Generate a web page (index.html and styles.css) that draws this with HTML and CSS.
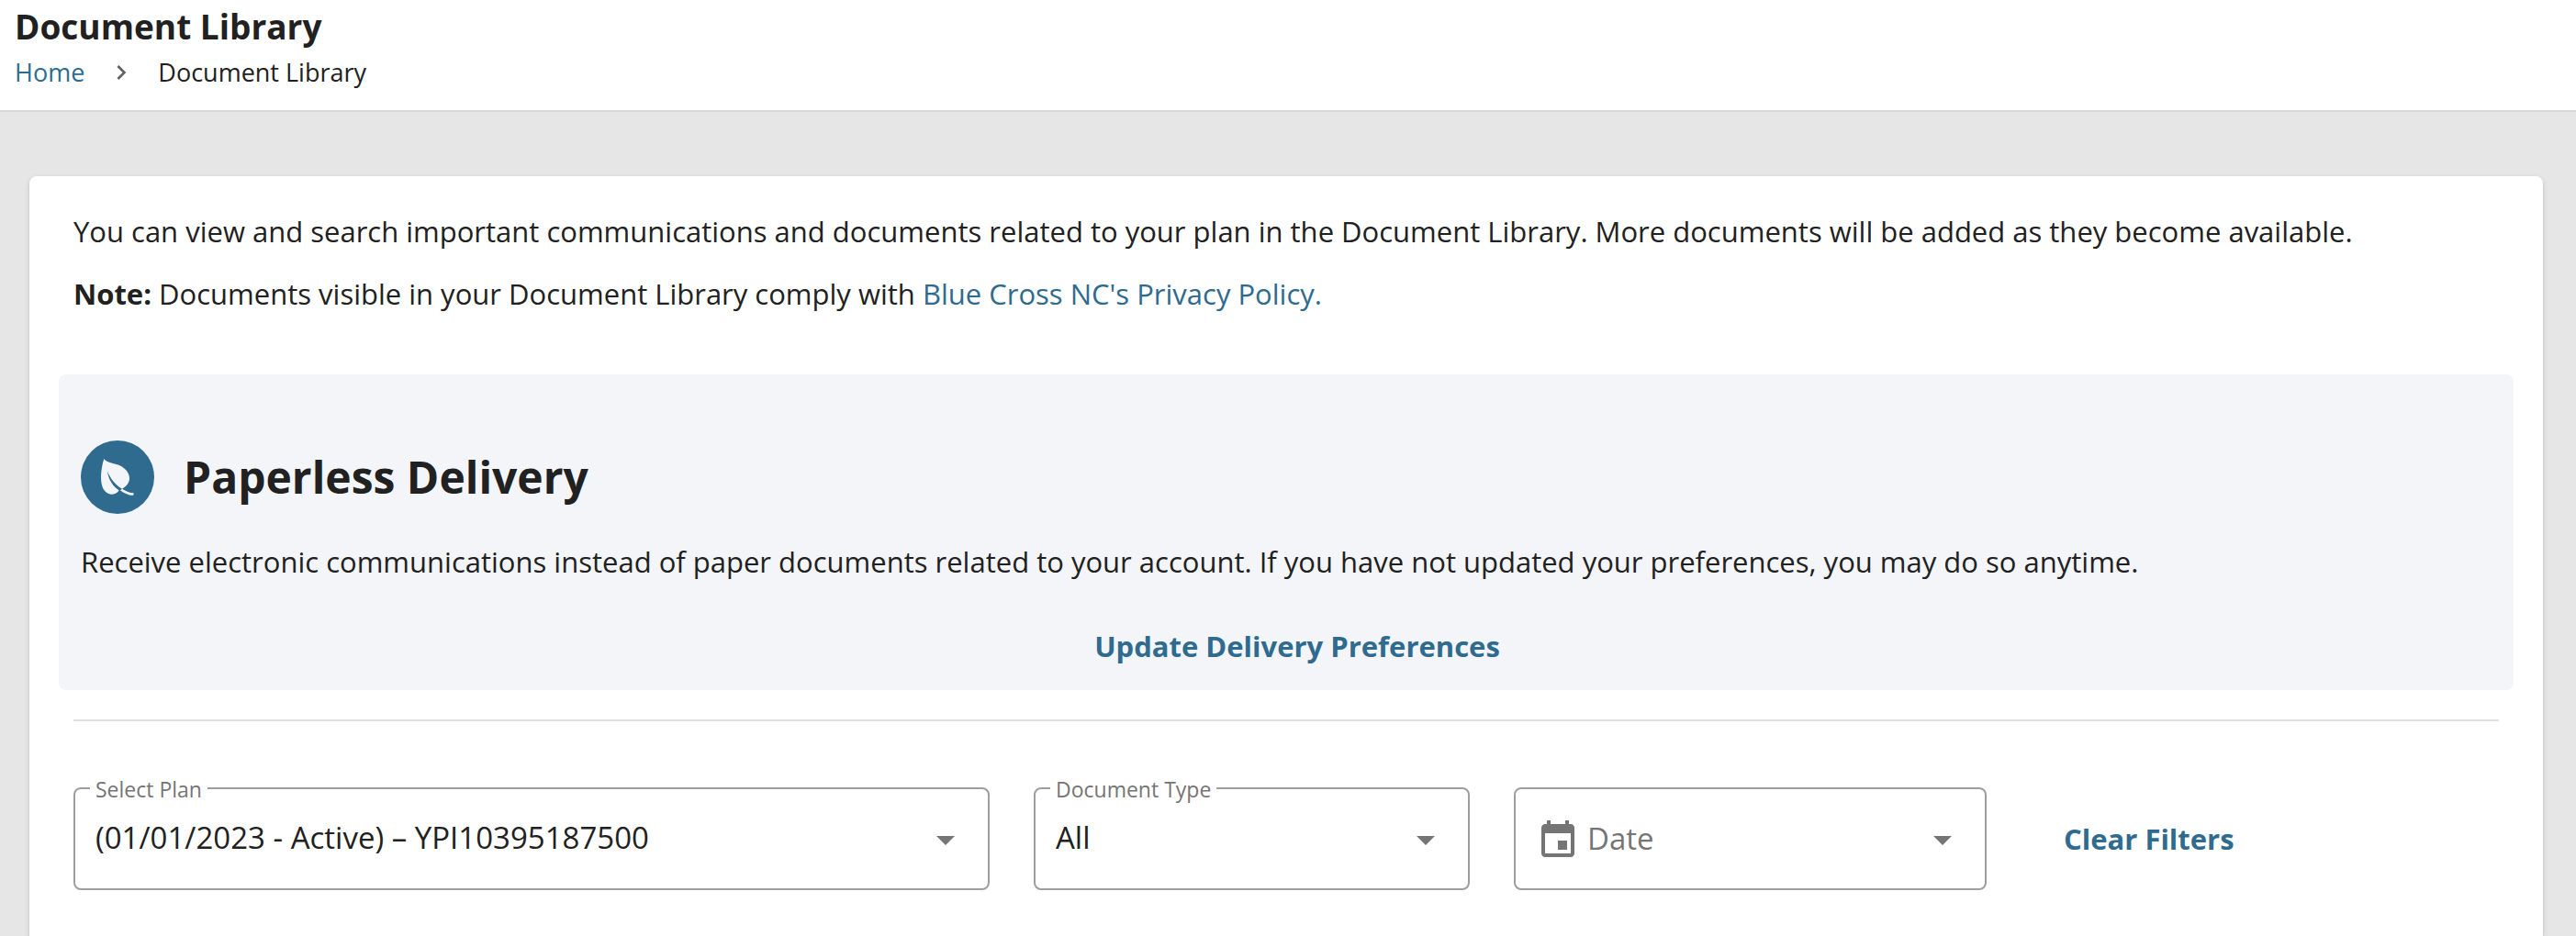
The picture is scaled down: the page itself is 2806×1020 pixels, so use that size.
FILE: index.html
```html
<!DOCTYPE html>
<html lang="en">
<head>
  <meta charset="utf-8">
  <meta name="viewport" content="width=device-width, initial-scale=1">
  <title>Document Library</title>
  <link rel="stylesheet" href="styles.css">
</head>
<body>
  <header class="page-header">
    <h1 class="page-title">Document Library</h1>
    <nav class="breadcrumb" aria-label="Breadcrumb">
      <a class="link" href="#">Home</a>
      <svg class="chevron" viewBox="0 0 24 24" aria-hidden="true"><path d="M10 6 8.59 7.41 13.17 12l-4.58 4.59L10 18l6-6z"/></svg>
      <span aria-current="page">Document Library</span>
    </nav>
  </header>

  <main class="card">
    <div class="intro">
      <p>You can view and search important communications and documents related to your plan in the Document Library. More documents will be added as they become available.</p>
      <p><strong>Note:</strong> Documents visible in your Document Library comply with <a class="link" href="#">Blue Cross NC's Privacy Policy.</a></p>
    </div>

    <section class="paperless">
      <div class="paperless-heading">
        <svg class="leaf" viewBox="0 0 240 240" aria-hidden="true">
          <circle class="leaf-disc" cx="120" cy="120" r="120"/>
          <path class="leaf-shape" d="M76 60C86 75 112 73 132 84C167 105 168 141 135 158C148 166 160 171 173 172L172 179C154 180 140 170 126 161C121 171 111 176 99 176C72 173 63 142 67 103C69 86 72 71 76 60Z"/>
          <path class="leaf-vein" d="M86 99C91 128 106 153 127 164L135 158C112 145 97 125 86 99Z"/>
        </svg>
        <h2>Paperless Delivery</h2>
      </div>
      <p>Receive electronic communications instead of paper documents related to your account. If you have not updated your preferences, you may do so anytime.</p>
      <button class="text-button" type="button">Update Delivery Preferences</button>
    </section>

    <hr class="divider">

    <form class="filters">
      <div class="field">
        <label class="field-label" for="plan">Select Plan</label>
        <select class="field-control" id="plan">
          <option>(01/01/2023 - Active) – YPI10395187500</option>
        </select>
        <svg class="arrow" viewBox="0 0 20 10" aria-hidden="true"><path d="M0 0h20L10 10z"/></svg>
      </div>
      <div class="field">
        <label class="field-label" for="type">Document Type</label>
        <select class="field-control" id="type">
          <option>All</option>
        </select>
        <svg class="arrow" viewBox="0 0 20 10" aria-hidden="true"><path d="M0 0h20L10 10z"/></svg>
      </div>
      <div class="field">
        <svg class="calendar" viewBox="0 0 24 24" aria-hidden="true"><path d="M17 12h-5v5h5v-5zM16 1v2H8V1H6v2H5c-1.11 0-1.99.9-1.99 2L3 19c0 1.1.89 2 2 2h14c1.1 0 2-.9 2-2V5c0-1.1-.9-2-2-2h-1V1h-2zm3 18H5V8h14v11z"/></svg>
        <input class="field-control date-control" type="text" placeholder="Date" aria-label="Date">
        <svg class="arrow" viewBox="0 0 20 10" aria-hidden="true"><path d="M0 0h20L10 10z"/></svg>
      </div>
      <button class="text-button clear-button" type="reset">Clear Filters</button>
    </form>
  </main>
</body>
</html>
```
FILE: styles.css
```css
* {
  box-sizing: border-box;
}

body {
  display: flex;
  flex-direction: column;
  min-height: 100vh;
  margin: 0;
  background: #e6e6e6;
  color: #212121;
  font: 31px/44px "Open Sans", "Noto Sans", sans-serif;
}

h1, h2, p {
  margin: 0;
}

.link {
  color: #2f6b8f;
  text-decoration: none;
}

/* Header */
.page-header {
  padding: 0 16px 20px;
  border-bottom: 2px solid #d8d8d8;
  background: #fff;
}

.page-title {
  font-size: 37px;
  font-weight: 700;
  line-height: 58px;
}

.breadcrumb {
  display: flex;
  align-items: center;
  gap: 24px;
  font-size: 27px;
  line-height: 42px;
}

.chevron {
  width: 32px;
  height: 32px;
  fill: #616161;
}

/* Card */
.card {
  flex: 1;
  margin: 70px 36px 0 32px;
  padding: 38px 32px 48px;
  border-radius: 8px 8px 0 0;
  background: #fff;
  box-shadow: 0 4px 2px -2px rgba(0, 0, 0, .2), 0 2px 2px rgba(0, 0, 0, .14), 0 2px 6px rgba(0, 0, 0, .12);
}

.intro {
  display: flex;
  flex-direction: column;
  gap: 24px;
  padding: 0 16px;
}

/* Paperless delivery panel */
.paperless {
  display: flex;
  flex-direction: column;
  margin-top: 66px;
  padding: 72px 0 26px 24px;
  border-radius: 8px;
  background: #f3f5f9;
}

.paperless-heading {
  display: flex;
  align-items: center;
  gap: 32px;
  margin-bottom: 30px;
}

.paperless-heading h2 {
  font-size: 48px;
  font-weight: 700;
  line-height: 64px;
}

.leaf {
  width: 80px;
  height: 80px;
}

.leaf-disc,
.leaf-vein {
  fill: #2f6b8f;
}

.leaf-shape {
  fill: #f3f5f9;
}

.text-button {
  padding: 0;
  border: 0;
  background: none;
  color: #2f6b8f;
  font: inherit;
  font-weight: 700;
  cursor: pointer;
}

.paperless .text-button {
  align-self: center;
  margin-top: 48px;
}

.divider {
  height: 2px;
  margin: 32px 16px 72px;
  border: 0;
  background: #e0e0e0;
}

/* Filters */
.filters {
  display: grid;
  grid-template-columns: 998fr 475fr 515fr 510fr;
  align-items: center;
  gap: 48px;
  padding: 0 16px;
}

.field {
  position: relative;
  display: flex;
  align-items: center;
  min-width: 0;
  height: 112px;
  padding-top: 4px;
  border: 2px solid #9e9e9e;
  border-radius: 8px;
}

.field-label {
  position: absolute;
  top: -14px;
  left: 16px;
  padding: 0 6px;
  background: #fff;
  color: #757575;
  font-size: 23px;
  line-height: 28px;
}

.field-control {
  flex: 1;
  width: 0;
  min-width: 0;
  height: 100%;
  padding: 0 60px 6px 22px;
  border: 0;
  outline: 0;
  appearance: none;
  background: none;
  color: inherit;
  font: inherit;
  font-size: 33px;
}

.date-control {
  padding-left: 8px;
}

.date-control::placeholder {
  color: #757575;
  opacity: 1;
}

.arrow {
  position: absolute;
  right: 36px;
  width: 20px;
  height: 10px;
  fill: #757575;
  pointer-events: none;
}

.calendar {
  flex: none;
  width: 48px;
  height: 48px;
  margin-left: 22px;
  fill: #757575;
}

.clear-button {
  justify-self: start;
  padding-left: 36px;
}
```
